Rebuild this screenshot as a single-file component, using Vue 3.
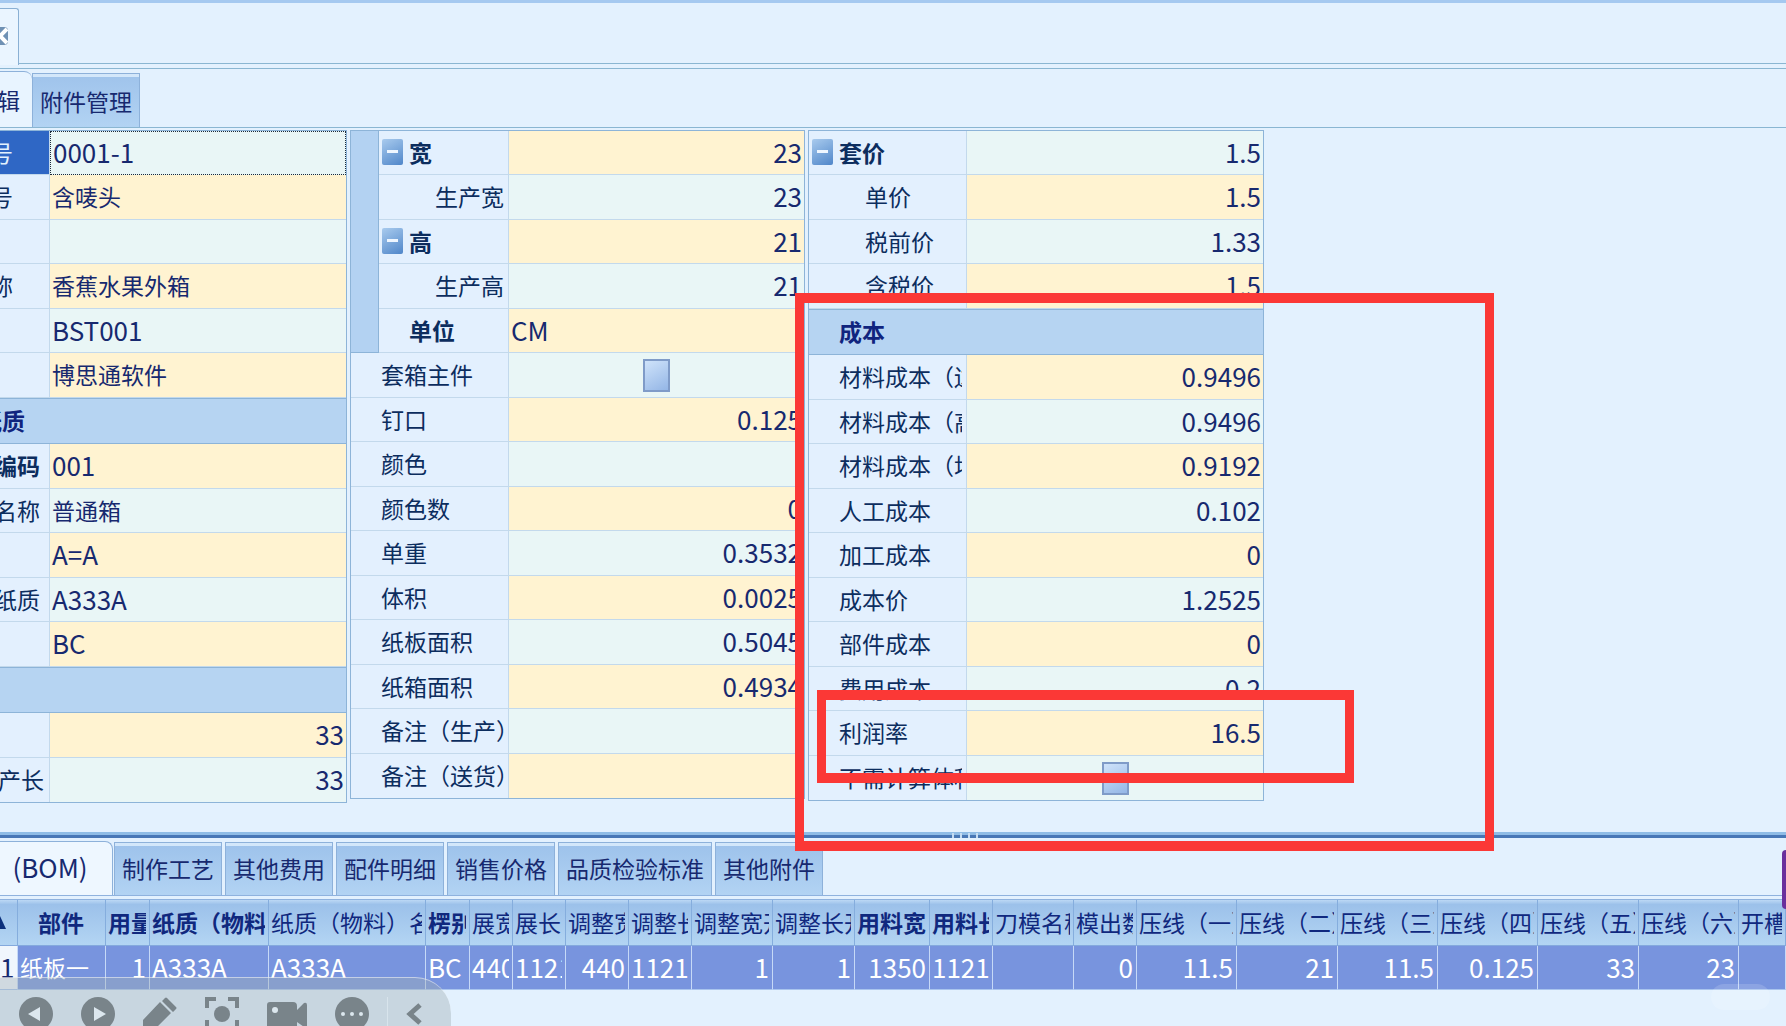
<script setup>
const specRows = [
  { label: '号', level: 'outer', value: '0001-1', num: true, focus: true },
  { label: '号', level: 'outer', value: '含唛头', warm: true },
  { label: '', value: '' },
  { label: '称', level: 'outer', value: '香蕉水果外箱', warm: true },
  { label: '', value: 'BST001', num: true },
  { label: '', value: '博思通软件', warm: true },
  { section: '纸质' },
  { label: '编码', level: 'inner', bold: true, value: '001', num: true, warm: true },
  { label: '名称', level: 'inner', value: '普通箱' },
  { label: '', value: 'A=A', num: true, warm: true },
  { label: '纸质', level: 'inner', value: 'A333A', num: true },
  { label: '', value: 'BC', num: true, warm: true },
  { section: ' ' },
  { label: '', value: '33', num: true, right: true, warm: true },
  { label: '产长', level: 'leaf', value: '33', num: true, right: true },
]

const sizeRows = [
  { label: '宽', toggle: true, bold: true, value: '23', right: true, band: true },
  { label: '生产宽', child: true, value: '23', right: true },
  { label: '高', toggle: true, bold: true, value: '21', right: true },
  { label: '生产高', child: true, value: '21', right: true },
  { label: '单位', bold: true, value: 'CM' },
  { label: '套箱主件', wide: true, check: true },
  { label: '钉口', wide: true, value: '0.125', right: true },
  { label: '颜色', wide: true, value: '' },
  { label: '颜色数', wide: true, value: '0', right: true },
  { label: '单重', wide: true, value: '0.3532', right: true },
  { label: '体积', wide: true, value: '0.0025', right: true },
  { label: '纸板面积', wide: true, value: '0.5045', right: true },
  { label: '纸箱面积', wide: true, value: '0.4934', right: true },
  { label: '备注（生产）', wide: true, value: '' },
  { label: '备注（送货）', wide: true, value: '' },
]

const costRows = [
  { label: '套价', toggle: true, bold: true, value: '1.5' },
  { label: '单价', child: true, value: '1.5', warm: true },
  { label: '税前价', child: true, value: '1.33' },
  { label: '含税价', child: true, value: '1.5', warm: true },
  { section: '成本' },
  { label: '材料成本（边）', value: '0.9496', warm: true },
  { label: '材料成本（高）', value: '0.9496' },
  { label: '材料成本（均）', value: '0.9192', warm: true },
  { label: '人工成本', value: '0.102' },
  { label: '加工成本', value: '0', warm: true },
  { label: '成本价', value: '1.2525' },
  { label: '部件成本', value: '0', warm: true },
  { label: '费用成本', value: '0.2' },
  { label: '利润率', value: '16.5', warm: true },
  { label: '不需计算体积', check: true },
]

const tabs = ['制作工艺', '其他费用', '配件明细', '销售价格', '品质检验标准', '其他附件']

const columns = [
  { title: '部件', w: 88, bold: true, center: true, value: '纸板一', cjk: true },
  { title: '用量', w: 44, bold: true, value: '1', right: true },
  { title: '纸质（物料）', w: 119, bold: true, value: 'A333A' },
  { title: '纸质（物料）名', w: 157, value: 'A333A' },
  { title: '楞别', w: 44, bold: true, value: 'BC' },
  { title: '展宽', w: 43, value: '440' },
  { title: '展长', w: 53, value: '1121' },
  { title: '调整宽', w: 63, value: '440', right: true },
  { title: '调整长', w: 63, value: '1121', right: true },
  { title: '调整宽开', w: 81, value: '1', right: true },
  { title: '调整长开', w: 82, value: '1', right: true },
  { title: '用料宽', w: 75, bold: true, value: '1350', right: true },
  { title: '用料长', w: 63, bold: true, value: '1121', right: true },
  { title: '刀模名称', w: 81, value: '' },
  { title: '模出数', w: 63, value: '0', right: true },
  { title: '压线（一）', w: 100, value: '11.5', right: true },
  { title: '压线（二）', w: 101, value: '21', right: true },
  { title: '压线（三）', w: 100, value: '11.5', right: true },
  { title: '压线（四）', w: 100, value: '0.125', right: true },
  { title: '压线（五）', w: 101, value: '33', right: true },
  { title: '压线（六）', w: 100, value: '23', right: true },
  { title: '开槽', w: 0, value: '' },
]
</script>

<template>
  <div class="app">
    <header class="doc-strip">
      <div class="doc-tab">
        <button class="close" aria-label="关闭">
          <svg width="8" height="20" viewBox="0 0 8 20">
            <rect x="-12" y="1" width="20" height="18" rx="4" fill="#6f91b4" />
            <path d="M7 3 L0 10 L7 17" fill="none" stroke="#fff" stroke-width="4" />
          </svg>
        </button>
      </div>
    </header>

    <nav class="page-tabs">
      <button class="page-tab active"><span>辑</span></button>
      <button class="page-tab">附件管理</button>
    </nav>

    <main class="panels">
      <table class="props">
        <colgroup><col class="c-spec" /><col /></colgroup>
        <tbody>
          <tr v-for="(r, i) in specRows" :key="i" :class="{ section: r.section }">
            <th v-if="r.section" colspan="2" scope="colgroup">
              <div class="cut title">{{ r.section }}</div>
            </th>
            <template v-else>
              <th scope="row" :class="{ chosen: r.focus, bold: r.bold }">
                <div class="cut" :class="r.level">{{ r.label }}</div>
              </th>
              <td :class="{ warm: r.warm, num: r.num, right: r.right, focus: r.focus }">{{ r.value }}</td>
            </template>
          </tr>
        </tbody>
      </table>

      <table class="props">
        <colgroup><col class="c-band" /><col class="c-size" /><col /></colgroup>
        <tbody>
          <tr v-for="(r, i) in sizeRows" :key="i">
            <td v-if="r.band" rowspan="5" class="band"></td>
            <th scope="row" :colspan="r.wide ? 2 : 1" :class="{ bold: r.bold }">
              <div class="name" :class="{ child: r.child, wide: r.wide }">
                <button v-if="r.toggle" class="toggle" aria-label="折叠"></button>
                <label v-if="r.check" for="main-part">{{ r.label }}</label>
                <span v-else>{{ r.label }}</span>
              </div>
            </th>
            <td class="num" :class="{ warm: i % 2 === 0, right: r.right, mid: r.check }">
              <input v-if="r.check" id="main-part" type="checkbox" />
              <template v-else>{{ r.value }}</template>
            </td>
          </tr>
        </tbody>
      </table>

      <table class="props">
        <colgroup><col class="c-cost" /><col /></colgroup>
        <tbody>
          <tr v-for="(r, i) in costRows" :key="i" :class="{ section: r.section }">
            <th v-if="r.section" colspan="2" scope="colgroup">
              <div class="name">{{ r.section }}</div>
            </th>
            <template v-else>
              <th scope="row" :class="{ bold: r.bold }">
                <div class="name" :class="{ child: r.child }">
                  <button v-if="r.toggle" class="toggle" aria-label="折叠"></button>
                  <label v-if="r.check" for="no-volume">{{ r.label }}</label>
                  <span v-else>{{ r.label }}</span>
                </div>
              </th>
              <td class="num right" :class="{ warm: r.warm, mid: r.check }">
                <input v-if="r.check" id="no-volume" type="checkbox" />
                <template v-else>{{ r.value }}</template>
              </td>
            </template>
          </tr>
        </tbody>
      </table>
    </main>

    <div class="splitter"><i></i><i></i><i></i><i></i></div>

    <nav class="detail-tabs">
      <button class="detail-tab active">(BOM)</button>
      <button v-for="t in tabs" :key="t" class="detail-tab">{{ t }}</button>
    </nav>

    <table class="grid">
      <colgroup>
        <col class="c-index" />
        <col v-for="c in columns" :key="c.title" :style="c.w ? { width: c.w + 'px' } : null" />
      </colgroup>
      <thead>
        <tr>
          <th scope="col" class="marker">
            <svg width="6" height="15" viewBox="0 0 6 15"><path d="M0 2 L6 15 H0 Z" fill="#0b2f7c" /></svg>
          </th>
          <th v-for="c in columns" :key="c.title" scope="col" :class="{ bold: c.bold, center: c.center }">
            <div>{{ c.title }}</div>
          </th>
        </tr>
      </thead>
      <tbody>
        <tr>
          <th scope="row" class="index">1</th>
          <td v-for="c in columns" :key="c.title" :class="{ right: c.right, cjk: c.cjk }">
            <div>{{ c.value }}</div>
          </td>
        </tr>
      </tbody>
    </table>

    <div class="mark outer-mark"></div>
    <div class="mark inner-mark"></div>
    <div class="edge-badge"></div>
    <div class="hint"></div>

    <div class="tools">
      <div class="tool-set">
        <button aria-label="上一页">
          <svg width="34" height="34" viewBox="0 0 34 34"><circle cx="17" cy="17" r="17" /><path class="hole" d="M21 10 V24 L9 17 Z" /></svg>
        </button>
        <button aria-label="下一页">
          <svg width="34" height="34" viewBox="0 0 34 34"><circle cx="17" cy="17" r="17" /><path class="hole" d="M13 10 V24 L25 17 Z" /></svg>
        </button>
        <button aria-label="画笔">
          <svg width="34" height="34" viewBox="0 0 34 34"><path d="M0 23 L17 5 L28 16 L10 34 H0 Z M19 4 L22 1 Q23 0 24 1 L33 10 Q34 11 33 12 L30 15 Z" /></svg>
        </button>
        <button aria-label="聚焦">
          <svg width="34" height="34" viewBox="0 0 34 34">
            <circle cx="17" cy="17" r="8" />
            <path class="line" d="M2 11 V2 H11 M23 2 H32 V11 M2 23 V32 H11 M23 32 H32 V23" />
          </svg>
        </button>
        <button aria-label="录像">
          <svg width="40" height="34" viewBox="0 0 40 34">
            <path d="M3 5 H26 Q30 5 30 9 V13 L37 6 Q40 5 40 8 V32 L30 25 V34 H0 V8 Q0 5 3 5 Z" />
            <circle class="hole" cx="8" cy="13" r="3" />
          </svg>
        </button>
        <button aria-label="更多">
          <svg width="34" height="34" viewBox="0 0 34 34">
            <circle cx="17" cy="17" r="17" />
            <circle class="hole" cx="8" cy="17" r="2" /><circle class="hole" cx="17" cy="17" r="2" /><circle class="hole" cx="26" cy="17" r="2" />
          </svg>
        </button>
      </div>
      <span class="divider"></span>
      <button aria-label="收起">
        <svg width="16" height="34" viewBox="0 0 16 34"><path class="chev" d="M14 8 L4 17 L14 26" /></svg>
      </button>
    </div>
  </div>
</template>

<style>
body {
  margin: 0;
}
</style>

<style scoped>
.app {
  --cjk: "Noto Sans CJK SC", sans-serif;
  --line: #8db4d8;
  --ink: #17296f;
  position: relative;
  min-height: 100vh;
  overflow: hidden;
  display: flex;
  flex-direction: column;
  background: #e3f1fe;
  color: var(--ink);
  font: 400 23px/30px var(--cjk);
}
button {
  font: inherit;
  color: inherit;
  border: 0;
  margin: 0;
  padding: 0;
  background: none;
}
.doc-strip {
  border-top: 3px solid #a5c9f0;
  border-bottom: 1px solid #8ab6d2;
  padding-top: 5px;
  height: 55px;
  display: flex;
}
.doc-tab {
  width: 18px;
  height: 56px;
  border: solid #8ab0d4;
  border-width: 1px 1px 0 0;
  border-radius: 0 3px 0 0;
  background: #eaf5ff;
}
.close {
  display: block;
  margin-top: 17px;
}
.close svg {
  display: block;
}
.page-tabs {
  margin-top: 4px;
  height: 58px;
  border-top: 1px solid #8ab6d2;
  border-bottom: 1px solid #8ab6d2;
  display: flex;
  align-items: flex-end;
}
.page-tab {
  height: 54px;
  padding: 0 7px;
  border: 1px solid #8db1da;
  border-bottom: 0;
  box-shadow: inset 0 3px #d3e7fa;
  background: linear-gradient(#9fc3eb, #b2d3f3);
}
.page-tab.active {
  width: 32px;
  height: 56px;
  padding: 0 12px 0 0;
  display: flex;
  justify-content: flex-end;
  align-items: center;
  overflow: hidden;
  border-width: 1px 0 0;
  border-radius: 0 8px 0 0;
  background: #e8f4ff;
  box-shadow: none;
}
.panels {
  display: grid;
  grid-template-columns: 347fr 455fr 456fr 519fr;
  column-gap: 3px;
  align-items: start;
  margin-top: 2px;
  padding-bottom: 29px;
}
.props {
  width: 100%;
  table-layout: fixed;
  border-collapse: separate;
  border-spacing: 0;
  border: 1px solid var(--line);
}
.props:first-child {
  border-left: 0;
}
.c-spec { width: 50px; }
.c-band { width: 28px; }
.c-size { width: 130px; }
.c-cost { width: 158px; }
.props tr { height: 44px; }
.props tr:nth-child(even) { height: 45px; }
.props tr.section { height: 46px; }
.props th,
.props td {
  padding: 0 0 2px;
  box-sizing: border-box;
  border-bottom: 1px solid #c3d9ec;
  text-align: left;
  font-weight: 400;
  white-space: nowrap;
  overflow: hidden;
}
.props th {
  color: #0c2d5e;
  border-right: 1px solid #c3d9ec;
  background: #e3f0fe;
}
.props tr:last-child > * { border-bottom: 0; }
.props th.bold,
.props .section th {
  font-weight: 700;
}
.props .section th {
  color: #10247e;
  border-top: 1px solid var(--line);
  border-bottom: 1px solid var(--line);
  border-right: 0;
  background: #b6d4f2;
}
.props td {
  padding: 0 2px 2px;
  background: #e9f6f6;
}
.props td.warm { background: #fff3d1; }
.props td.band {
  background: #b3d2f2;
  border-right: 1px solid var(--line);
  border-bottom: 1px solid var(--line);
}
.num,
.grid td,
.grid tbody .index,
.detail-tab.active {
  font-size: 26px;
}
.props td.right { text-align: right; }
.props td.mid {
  padding-bottom: 0;
  text-align: center;
  font-size: 0;
}
.props th.chosen {
  color: #e3f1fe;
  background: #2f67c5;
}
.props td.focus {
  border: 1px dotted #1b2a3a;
}
.cut {
  display: flex;
  justify-content: flex-end;
  min-height: 30px;
  overflow: hidden;
}
.cut.outer { padding-right: 36px; }
.cut.inner { padding-right: 9px; }
.cut.leaf { padding-right: 5px; }
.cut.title {
  width: 25px;
}
.name {
  position: relative;
  padding-left: 30px;
  margin-right: 4px;
  overflow: hidden;
}
.name.child { padding-left: 56px; }
.toggle {
  position: absolute;
  left: 3px;
  top: 2px;
  width: 21px;
  height: 26px;
  border-radius: 2px;
  background: linear-gradient(#eef6ff, #eef6ff) center / 11px 3px no-repeat, linear-gradient(150deg, #a9cbee, #4f86c9);
}
input[type="checkbox"] {
  appearance: none;
  width: 27px;
  height: 33px;
  margin: 0;
  border: 2px solid #7f9bc8;
  background: linear-gradient(150deg, #cfe3fa, #94b6e6);
  vertical-align: middle;
}
.splitter {
  height: 3px;
  border-top: 3px solid #8fbce6;
  background: #4877b6;
  display: flex;
  justify-content: center;
  gap: 6px;
  padding-left: 144px;
}
.splitter i {
  width: 2px;
  height: 5px;
  margin-top: -2px;
  background: #c5dcf2;
}
.detail-tabs {
  margin-top: 3px;
  display: flex;
  align-items: flex-end;
  gap: 3px;
  height: 54px;
  border-bottom: 1px solid #8fb2de;
}
.detail-tab {
  height: 53px;
  padding: 0 7px 2px;
  border: 1px solid #8db1da;
  border-bottom: 0;
  box-shadow: inset 0 3px #d3e7fa;
  background: linear-gradient(#9dc2eb, #b2d3f3);
}
.detail-tab.active {
  width: 113px;
  height: 54px;
  margin-right: -2px;
  padding: 0 12px 4px 0;
  border-width: 1px 1px 0 0;
  border-radius: 0 8px 0 0;
  background: #eef7ff;
  box-shadow: none;
}
.grid {
  width: 100%;
  margin-top: 3px;
  table-layout: fixed;
  border-collapse: separate;
  border-spacing: 0;
  border-top: 1px solid #8fb2de;
}
.c-index { width: 18px; }
.grid th,
.grid td {
  padding: 0 3px 2px 2px;
  box-sizing: border-box;
  white-space: nowrap;
  overflow: hidden;
  text-align: left;
  font-weight: 400;
}
.grid thead th {
  height: 46px;
  color: #10287e;
  border-right: 1px solid #85addd;
  border-bottom: 1px solid #84a9dd;
  background: linear-gradient(#bcd8f5, #9cc1ea 10%, #b3d5f3);
}
.grid thead th.bold { font-weight: 700; }
.grid thead th.center { text-align: center; }
.grid thead th.marker,
.grid tbody th.index { padding: 0 0 2px; }
.marker svg { display: block; }
.grid tbody td,
.grid tbody th {
  height: 44px;
  border-right: 1px solid #c6d9f7;
  border-bottom: 1px solid #a9c5ee;
  background: #7894de;
  color: #fff;
}
.grid tbody th.index {
  background: #f0f6fd;
  color: var(--ink);
}
.grid td.right { text-align: right; }
.grid td.cjk { font-size: 23px; }
.grid div { overflow: hidden; }
.mark {
  position: absolute;
  box-sizing: border-box;
  border: solid #fb3836;
  border-width: 10px 9px;
  pointer-events: none;
}
.outer-mark {
  left: 795px;
  top: 293px;
  width: 699px;
  height: 558px;
}
.inner-mark {
  left: 817px;
  top: 690px;
  width: 537px;
  height: 93px;
}
.edge-badge {
  position: absolute;
  right: 0;
  top: 850px;
  width: 4px;
  height: 59px;
  border-radius: 4px 0 0 4px;
  background: #6a2f9c;
}
.hint {
  position: absolute;
  right: 16px;
  top: 984px;
  width: 59px;
  height: 26px;
  border-radius: 13px;
  background: rgba(255, 255, 255, 0.15);
}
.tools {
  position: absolute;
  left: 0;
  bottom: 0;
  box-sizing: border-box;
  height: 49px;
  padding: 19px 29px 0 19px;
  display: flex;
  gap: 18px;
  border-top: 1px solid rgba(255, 255, 255, 0.5);
  border-radius: 0 36px 0 0;
  background: rgba(160, 175, 180, 0.4);
  overflow: hidden;
}
.tool-set {
  display: flex;
  gap: 28px;
}
.tools svg {
  display: block;
  fill: #79848a;
}
.tools svg .hole { fill: #dce7ee; }
.tools svg .line {
  fill: none;
  stroke: #79848a;
  stroke-width: 4;
}
.tools svg .chev {
  fill: none;
  stroke: #79848a;
  stroke-width: 5;
}
.divider {
  width: 1px;
  height: 34px;
  background: #d8e4ec;
}
</style>
